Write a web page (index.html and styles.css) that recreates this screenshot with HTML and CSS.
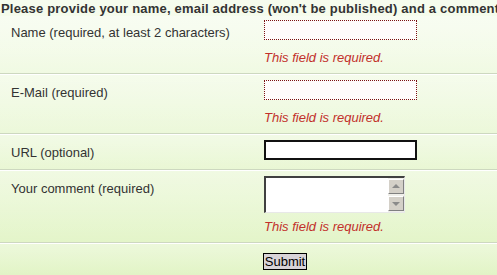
FILE: index.html
```html
<!DOCTYPE html>
<html lang="en">
<head>
    <meta charset="UTF-8">
    <title>Comment form</title>
    <link rel="stylesheet" href="styles.css">
</head>
<body>
<h3 class="intro">Please provide your name, email address (won't be published) and a comment</h3>
<form class="comment-form" method="post">
    <div class="row first">
        <label class="label" for="cname">Name (required, at least 2 characters)</label>
        <div class="field">
            <input type="text" id="cname" class="text invalid">
            <div class="msg">This field is required.</div>
        </div>
    </div>
    <div class="row">
        <label class="label" for="cemail">E-Mail (required)</label>
        <div class="field">
            <input type="text" id="cemail" class="text invalid">
            <div class="msg">This field is required.</div>
        </div>
    </div>
    <div class="row single">
        <label class="label" for="curl">URL (optional)</label>
        <div class="field">
            <input type="text" id="curl" class="text plain">
        </div>
    </div>
    <div class="row">
        <label class="label" for="ccomment">Your comment (required)</label>
        <div class="field">
            <div class="memo">
                <textarea id="ccomment"></textarea>
                <div class="scroll">
                    <span class="arrow up"></span>
                    <span class="track"></span>
                    <span class="arrow down"></span>
                </div>
            </div>
            <div class="msg">This field is required.</div>
        </div>
    </div>
    <div class="row last">
        <div class="label"></div>
        <div class="field">
            <button type="submit" class="submit">Submit</button>
        </div>
    </div>
</form>
</body>
</html>
```

FILE: styles.css
```css
body {
    margin: 0;
    height: 275px;
    overflow: hidden;
    font-family: "Liberation Sans", Arial, sans-serif;
    font-size: 13px;
    color: #333;
    background: linear-gradient(#f6fcee, #e1f4c4);
}

.intro {
    margin: 0;
    padding: 2px 0 0 1px;
    font-size: 13px;
    line-height: 14px;
    letter-spacing: 0.2px;
    font-weight: bold;
    color: #333;
    white-space: nowrap;
    overflow: hidden;
}

.row {
    display: flex;
    padding: 6px 0 8px 11px;
    border-bottom: 1px solid #cdd8c0;
    box-shadow: inset 0 1px #fff;
    background: linear-gradient(rgba(255, 255, 255, 0.35), rgba(255, 255, 255, 0));
}

.row.first {
    padding-top: 4px;
    box-shadow: none;
}

.row.single {
    padding-bottom: 9px;
}

.row.last {
    border-bottom: none;
    padding-top: 10px;
}

.label {
    width: 253px;
    margin-top: 5px;
    line-height: 15px;
    font-size: 13px;
}

.field {
    display: flex;
    flex-direction: column;
    align-items: flex-start;
}

.text {
    box-sizing: border-box;
    width: 153px;
    height: 20px;
    margin: 0;
    padding: 1px 3px;
    background: #fff;
    font: 12px "Liberation Sans", Arial, sans-serif;
}

.text.invalid {
    border: 1px dotted #7a1010;
    background: #fffcfc;
}

.text.plain {
    border: 2px solid #111;
}

.msg {
    margin-top: 10px;
    line-height: 15px;
    font-size: 13px;
    font-style: italic;
    color: #c2302b;
}

.memo + .msg {
    margin-top: 6px;
}

.memo {
    box-sizing: border-box;
    display: flex;
    width: 141px;
    height: 37px;
    border-style: solid;
    border-width: 2px 1px 1px 2px;
    border-color: #404040 #e8e8e8 #e8e8e8 #404040;
    background: #fff;
}

.memo textarea {
    flex: 1;
    border: none;
    margin: 0;
    padding: 1px;
    resize: none;
    outline: none;
    background: #fff;
}

.scroll {
    display: flex;
    flex-direction: column;
    width: 16px;
    padding: 1px 0 1px 0;
    background: #f0efea;
}

.arrow {
    position: relative;
    box-sizing: border-box;
    height: 15px;
    background: #d4d0c8;
    border: 1px solid;
    border-color: #fff #808080 #808080 #fff;
}

.arrow::after {
    content: "";
    position: absolute;
    left: 3px;
    top: 4px;
    border-left: 4px solid transparent;
    border-right: 4px solid transparent;
}

.arrow.up::after {
    border-bottom: 4px solid #8a8a8a;
}

.arrow.down::after {
    top: 5px;
    border-top: 4px solid #8a8a8a;
}

.track {
    flex: 1;
}

.submit {
    box-sizing: border-box;
    width: 44px;
    height: 17px;
    margin-left: -1px;
    padding: 0;
    border: 1px solid #000;
    background: #d8d4d8;
    font: 13px "Liberation Sans", Arial, sans-serif;
    line-height: 15px;
    color: #000;
}
```
